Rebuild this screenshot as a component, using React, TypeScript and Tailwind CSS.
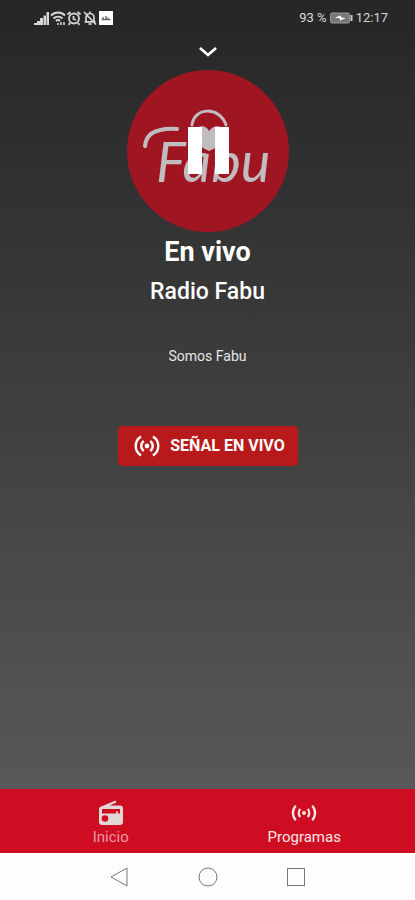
import React from 'react';

const SignalIcon = () => (
  <svg className="w-4 h-4" viewBox="0 0 16 16" fill="currentColor" aria-hidden="true">
    <path d="M0 13h3v2H0zM3 11h3v4H3zM6 8h3v7H6zM9.500 5.500h2.500v9.500H9.500zM12.500 2H15v13h-2.500z" />
  </svg>
);

const WifiIcon = () => (
  <svg className="w-4 h-4" viewBox="0 0 16 16" fill="none" stroke="currentColor" strokeWidth="1.900" aria-hidden="true">
    <path d="M1 5.500c4-4 10-4 14 0M3.500 8.500c2.500-2.500 6.500-2.500 9 0M6 11c1.200-1.200 2.800-1.200 4 0" />
    <path d="M7 14h2M11 12v3M14 15v-3" strokeWidth="1.600" />
  </svg>
);

const AlarmIcon = () => (
  <svg className="w-4 h-4" viewBox="0 0 16 16" fill="none" stroke="currentColor" strokeWidth="1.800" aria-hidden="true">
    <circle cx="8" cy="8.500" r="5" />
    <path d="M1.500 4.500l3-2.500M14.500 4.500l-3-2.500M7.500 6v3l2.500 1M4 13l-1.500 1.800M12 13l1.500 1.800" />
  </svg>
);

const BellOffIcon = () => (
  <svg className="w-4 h-4" viewBox="0 0 16 16" fill="none" stroke="currentColor" strokeWidth="1.700" aria-hidden="true">
    <path d="M4 11.500V7.500a4 4 0 0 1 8 0v4M2.500 11.800h11M8 3.500V1.500M2 2l12 12.500" />
    <path d="M6.500 14h3" />
  </svg>
);

const LiveIcon = () => (
  <svg className="w-[26px] h-[22px]" viewBox="0 0 26 22" fill="none" stroke="currentColor" strokeWidth="2.400" aria-hidden="true">
    <circle cx="13" cy="11" r="2.400" fill="currentColor" stroke="none" />
    <path d="M9.800 6a6.200 6.200 0 0 0 0 10M16.200 6a6.200 6.200 0 0 1 0 10" />
    <path d="M7 1.500a11.200 11.200 0 0 0 0 19M19 1.500a11.200 11.200 0 0 1 0 19" />
  </svg>
);

const ProgramsIcon = () => (
  <svg className="w-[26px] h-4" viewBox="0 0 26 16" fill="none" stroke="currentColor" strokeWidth="2.300" aria-hidden="true">
    <circle cx="13" cy="8" r="2" fill="currentColor" stroke="none" />
    <path d="M9.300 4a6 6 0 0 0 0 8M16.700 4a6 6 0 0 1 0 8" />
    <path d="M4.800 .8a10.500 10.500 0 0 0 0 14.400M21.200 .8a10.500 10.500 0 0 1 0 14.400" />
  </svg>
);

const RadioIcon = () => (
  <svg className="w-6 h-7" viewBox="0 0 24 28" aria-hidden="true">
    <path d="M3.500 7L16.500 1.500l1 2L10.500 6.500H21a3 3 0 0 1 3 3V23a3 3 0 0 1-3 3H3a3 3 0 0 1-3-3V10c0-1.500 1-2.300 3.500-3z" fill="#e3d6d6" />
    <path d="M3 10h18v4.500h-2v-2h-2v2H3z" fill="#cf0d22" />
    <circle cx="6" cy="19.500" r="3.300" fill="#cf0d22" />
  </svg>
);

const StatusBar = () => (
  <header className="h-9 shrink-0 flex items-center justify-between pl-[34px] pr-[27px] bg-[#272727] text-[#d6d6d6]">
    <div className="flex items-center">
      <SignalIcon />
      <WifiIcon />
      <AlarmIcon />
      <BellOffIcon />
      <svg className="w-4 h-4" viewBox="0 0 16 16" aria-hidden="true">
        <path d="M1 1h14v14H1z" fill="#fff" />
        <path d="M3.500 9.500h9M5 7v2M8 6v3M10 7.500v2" stroke="#666" strokeWidth="1.300" />
      </svg>
    </div>
    <div className="flex items-center gap-[3px] text-[13px]">
      <span>93 %</span>
      <svg className="w-[23px] h-3" viewBox="0 0 23 12" aria-hidden="true">
        <rect x="0.500" y="1" width="19" height="10" rx="1.500" fill="#777" stroke="#999" />
        <path d="M21.500 3v6" stroke="#ccc" strokeWidth="2" />
        <path d="M5 5.500l6-2v2l5 .5-6 2.500v-2z" fill="#fff" />
      </svg>
      <span>12:17</span>
    </div>
  </header>
);

const StationButton = () => (
  <button type="button" aria-label="Pausar" className="mt-1 size-[162px] rounded-full bg-[#9f1622]">
    <svg className="size-full" viewBox="0 0 162 162">
      <g fill="none" stroke="#c1bcbd" strokeLinecap="round">
        <path d="M65 55c2-18 28-19 34 0" strokeWidth="3" />
        <path d="M18 76c1-14 14-18 32-17" strokeWidth="4" />
      </g>
      <path d="M82 81c-17-8-20-17-11-24 5-2 9 0 11 4 4-6 11-6 15-2 7 8 0 16-15 22z" fill="#c1bcbd" />
      <text x="29" y="112" fontSize="56" fontStyle="italic" fill="#c1bcbd" className="font-[Lato,sans-serif]">Fabu</text>
      <path d="M61 57h14v47H61zM88 57h14v47H88z" fill="#fff" />
    </svg>
  </button>
);

export default function App() {
  return (
    <div className="min-h-screen flex flex-col bg-white text-white font-[Roboto,sans-serif]">
      <StatusBar />

      <main className="flex-1 flex flex-col items-center bg-linear-to-b from-[#282828] to-[#585858]">
        <button type="button" aria-label="Minimizar" className="mt-0.5 p-1">
          <svg className="w-5 h-5" viewBox="0 0 20 20" fill="none" stroke="currentColor" strokeWidth="2.800" aria-hidden="true">
            <path d="M2 6l8 7 8-7" />
          </svg>
        </button>
        <StationButton />
        <h1 className="mt-1 text-[27px] leading-8 font-bold">En vivo</h1>
        <h2 className="mt-2 text-[23px] leading-8 font-medium">Radio Fabu</h2>
        <p className="mt-[38px] text-sm leading-5 text-[#e6e6e6]">Somos Fabu</p>
        <button type="button" className="mt-15 h-10 w-45 pl-1 flex items-center justify-center gap-2.5 rounded bg-[#b81a1b] text-base font-bold">
          <LiveIcon />
          SEÑAL EN VIVO
        </button>
      </main>

      <nav className="h-16 shrink-0 px-3.5 grid grid-cols-2 bg-[#cf0d22] text-[15px] leading-5">
        <a href="#inicio" className="pt-2.5 flex flex-col items-center text-[#eb9aa2]">
          <RadioIcon />
          Inicio
        </a>
        <a href="#programas" className="pt-2.5 flex flex-col items-center text-[#fbe5e7]">
          <span className="h-7 flex items-center">
            <ProgramsIcon />
          </span>
          Programas
        </a>
      </nav>

      {/* Android navigation keys */}
      <footer className="h-[47px] shrink-0 flex items-center justify-center gap-16 bg-[#fdfdfd] text-[#777]">
        <button type="button" aria-label="Atrás">
          <svg className="w-6 h-6" viewBox="0 0 24 24" fill="none" stroke="currentColor">
            <path d="M19 3v18L3 12z" />
          </svg>
        </button>
        <button type="button" aria-label="Inicio del sistema">
          <svg className="w-6 h-6" viewBox="0 0 24 24" fill="none" stroke="currentColor">
            <circle cx="12" cy="12" r="9" />
          </svg>
        </button>
        <button type="button" aria-label="Recientes">
          <svg className="w-6 h-6" viewBox="0 0 24 24" fill="none" stroke="currentColor">
            <rect x="3.500" y="3.500" width="17" height="17" />
          </svg>
        </button>
      </footer>
    </div>
  );
}
